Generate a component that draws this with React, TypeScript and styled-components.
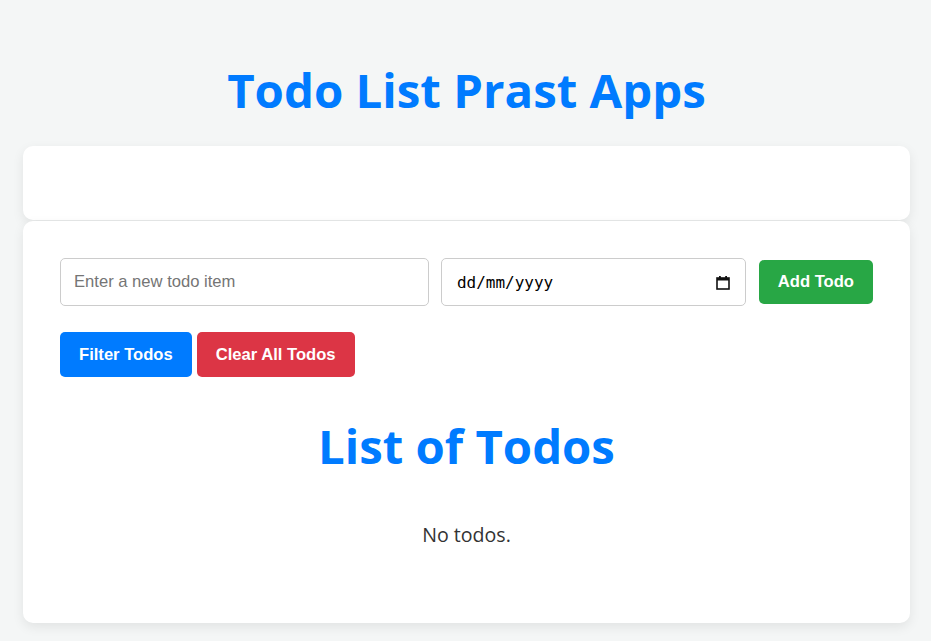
import React from "react";
import styled, { createGlobalStyle } from "styled-components";

const Global = createGlobalStyle`
  html, body { margin: 0; padding: 0; }
  body {
    background: #f4f6f6;
    font-family: "Open Sans", "Noto Sans", sans-serif;
    color: #333;
  }
  * { box-sizing: border-box; }
`;

const Page = styled.div`
  padding: 0 21px 18px 23px;
`;

const Title = styled.h1`
  margin: 0;
  height: 146px;
  padding-top: 56px;
  text-align: center;
  font-family: "Open Sans", sans-serif;
  font-weight: 700;
  font-size: 47.4px;
  line-height: 68px;
  color: #007bff;
`;

const Card = styled.div<{ $h?: number }>`
  background: #fff;
  border-radius: 10px;
  box-shadow: 0 4px 12px rgba(0, 0, 0, 0.08);
  ${(p) => (p.$h ? `height: ${p.$h}px;` : "")}
  & + & { margin-top: 1px; }
`;

const Body = styled.div`
  padding: 37px 37px 0 37px;
  height: 402px;
`;

const FormRow = styled.div`
  display: flex;
  align-items: center;
  gap: 12px;
`;

const TextInput = styled.input`
  width: 369px;
  height: 48px;
  border: 1px solid #ccc;
  border-radius: 5px;
  padding: 0 13px;
  font-family: "Liberation Sans", Arial, sans-serif;
  font-size: 16.6px;
  color: #333;
  outline: none;
  &::placeholder { color: #757575; }
`;

const DateField = styled.label`
  width: 305px;
  height: 48px;
  border: 1px solid #ccc;
  border-radius: 5px;
  padding: 0 15px 0 15px;
  display: flex;
  align-items: center;
  background: #fff;
`;

const DateText = styled.input`
  flex: 1;
  min-width: 0;
  border: none;
  padding: 0;
  outline: none;
  background: transparent;
  font-family: "DejaVu Sans Mono", "Liberation Mono", monospace;
  font-size: 16px;
  color: #000;
  &::placeholder { color: #000; opacity: 1; }
`;

const CalendarIcon = styled.svg`
  width: 14px;
  height: 15px;
  flex: none;
  margin-left: 4px;
`;

const Button = styled.button<{ $bg: string; $h?: number }>`
  height: ${(p) => p.$h ?? 45}px;
  padding: 0 19px;
  border: none;
  border-radius: 5px;
  background: ${(p) => p.$bg};
  color: #fff;
  font-family: "Liberation Sans", Arial, sans-serif;
  font-weight: 700;
  font-size: 16.6px;
  cursor: pointer;
`;

const AddButton = styled(Button)`
  margin-left: 1px;
`;

const Actions = styled.div`
  display: flex;
  gap: 5px;
  margin-top: 26px;
`;

const ListTitle = styled.h2`
  margin: 30px 0 0;
  text-align: center;
  font-family: "Open Sans", sans-serif;
  font-weight: 700;
  font-size: 47.3px;
  line-height: 78px;
  color: #007bff;
`;

const Empty = styled.p`
  margin: 36px 0 0;
  text-align: center;
  font-family: "Open Sans", sans-serif;
  font-size: 19.6px;
  line-height: 28px;
  color: #333;
`;

export default function App() {
  return (
    <>
      <Global />
      <Page>
        <Title>Todo List Prast Apps</Title>
        <Card $h={74} />
        <Card>
          <Body>
            <FormRow>
              <TextInput placeholder="Enter a new todo item" />
              <DateField>
                <DateText placeholder="dd/mm/yyyy" />
                <CalendarIcon viewBox="0 0 14 15" aria-hidden="true">
                  <rect x="1" y="3" width="12" height="11" fill="none" stroke="#111" strokeWidth="1.6" />
                  <rect x="1" y="3" width="12" height="2.5" fill="#111" />
                  <rect x="3" y="1" width="1.8" height="3" fill="#111" />
                  <rect x="9.2" y="1" width="1.8" height="3" fill="#111" />
                </CalendarIcon>
              </DateField>
              <AddButton $bg="#28a745" $h={44}>Add Todo</AddButton>
            </FormRow>
            <Actions>
              <Button $bg="#007bff">Filter Todos</Button>
              <Button $bg="#dc3545">Clear All Todos</Button>
            </Actions>
            <ListTitle>List of Todos</ListTitle>
            <Empty>No todos.</Empty>
          </Body>
        </Card>
      </Page>
    </>
  );
}
